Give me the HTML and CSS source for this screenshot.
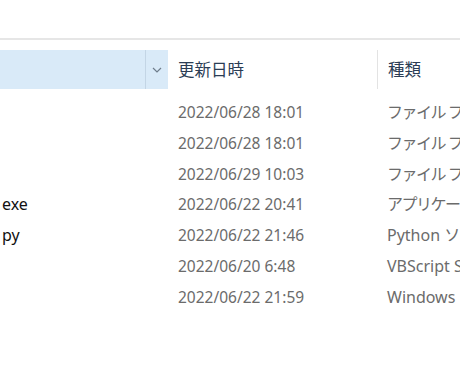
FILE: index.html
```html
<!DOCTYPE html>
<html lang="ja">
<head>
    <meta charset="UTF-8">
    <title>ファイル一覧</title>
    <link rel="stylesheet" href="styles.css">
</head>
<body>
    <div class="topline"></div>
    <div class="list">
        <!-- ヘッダー -->
        <div class="head">
            <div class="col-name">
                <span class="sort">
                    <svg width="10" height="6" viewBox="0 0 10 6"><path d="M1 1 L5 5 L9 1" fill="none" stroke="#6f7d8c" stroke-width="1.2"/></svg>
                </span>
            </div>
            <div class="col-date">更新日時</div>
            <div class="col-type">種類</div>
        </div>
        <!-- 行 -->
        <div class="row"><div class="name"></div><div class="date">2022/06/28 18:01</div><div class="type jp">ファイル フォルダー</div></div>
        <div class="row"><div class="name"></div><div class="date">2022/06/28 18:01</div><div class="type jp">ファイル フォルダー</div></div>
        <div class="row"><div class="name"></div><div class="date">2022/06/29 10:03</div><div class="type jp">ファイル フォルダー</div></div>
        <div class="row"><div class="name">exe</div><div class="date">2022/06/22 20:41</div><div class="type jp">アプリケーション</div></div>
        <div class="row"><div class="name">py</div><div class="date">2022/06/22 21:46</div><div class="type">Python ソース ファイル</div></div>
        <div class="row"><div class="name"></div><div class="date">2022/06/20 6:48</div><div class="type">VBScript Script ファイル</div></div>
        <div class="row"><div class="name"></div><div class="date">2022/06/22 21:59</div><div class="type">Windows バッチ ファイル</div></div>
    </div>
</body>
</html>
```

FILE: styles.css
```css
body {
    margin: 0;
    background: #fff;
    font-family: "Noto Sans", "Noto Sans CJK JP", sans-serif;
    overflow: hidden;
    width: 460px;
    height: 380px;
}
.topline {
    height: 38px;
    border-bottom: 2px solid #e6e6e6;
}
.list {
    padding-top: 10px;
}
.head {
    display: grid;
    grid-template-columns: 168px 209px 1fr;
    height: 37px;
    margin-bottom: 9px;
    font-size: 16.5px;
    color: #2b3d55;
    white-space: nowrap;
}
.col-name {
    background: #d9eaf8;
    display: flex;
    justify-content: flex-end;
}
.sort {
    width: 22px;
    border-left: 1px solid #c3d5e5;
    display: flex;
    align-items: center;
    justify-content: center;
}
.col-date {
    padding-left: 10px;
    line-height: 39px;
}
.col-type {
    border-left: 1px solid #e3e3e3;
    padding-left: 10px;
    line-height: 39px;
}
.row {
    display: grid;
    grid-template-columns: 168px 209px 1fr;
    height: 30.8px;
    line-height: 32px;
    font-size: 15.5px;
    white-space: nowrap;
}
.name {
    color: #111;
    padding-left: 2px;
    font-size: 16px;
}
.date {
    color: #6b6b6b;
    padding-left: 10px;
}
.type {
    color: #6b6b6b;
    padding-left: 10px;
    font-size: 16px;
    overflow: hidden;
}
.type.jp {
    letter-spacing: -1.5px;
}
```
